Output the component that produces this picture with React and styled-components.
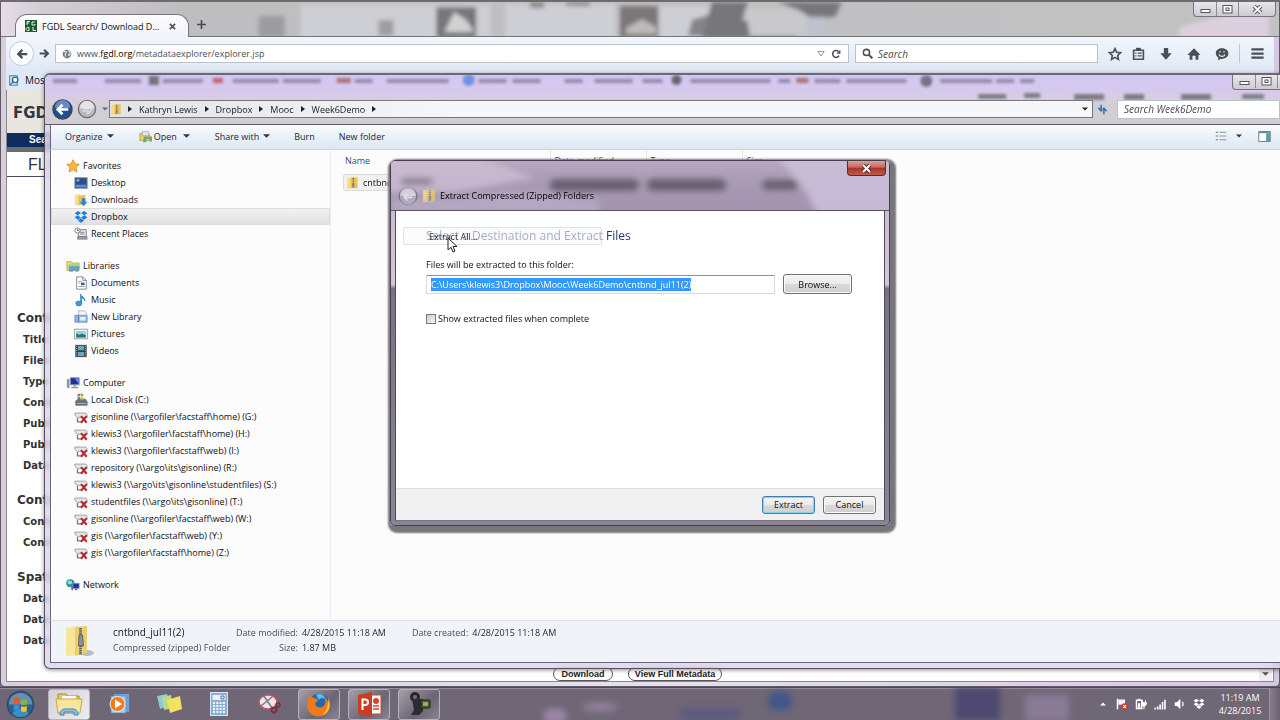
import React, { useEffect, useRef } from "react";
import styled, { createGlobalStyle, css } from "styled-components";

const Global = createGlobalStyle`
  *, *::before, *::after { box-sizing: border-box; }
  html, body { margin: 0; padding: 0; }
  body { font-family: "Open Sans", "Noto Sans", sans-serif; font-size: 9px; color: #0f0f12; overflow: hidden; }
  button, input { font: inherit; color: inherit; margin: 0; }
  a { color: inherit; text-decoration: none; }
  svg { display: block; flex: none; }
  ul { list-style: none; margin: 0; padding: 0; }
  h1, h2, p { margin: 0; font: inherit; }
`;

const Desktop = styled.div`
  position: relative;
  display: flex;
  flex-direction: column;
  height: 100vh;
  background: #6f6676;
  overflow: hidden;
`;

/* ---------- browser ---------- */

const Browser = styled.section`
  flex: 1;
  min-height: 0;
  display: flex;
  flex-direction: column;
  padding: 0 5px 4px;
  border: 1px solid #5d5a62;
  border-top: 2px solid #6c6c6c;
  border-radius: 5px;
  background: linear-gradient(to right, #d9cfdc, #e6e0ee 50%, #d6c8e4);
  position: relative;
`;

const Backdrop = styled.svg`
  position: absolute;
  inset: 0;
  width: 100%;
  height: ${(p) => p.$height};
`;

const TabStrip = styled.header`
  position: relative;
  display: flex;
  height: 35px;
  margin: 0 -5px;
  padding-left: 14px;
  align-items: flex-end;
  border-bottom: 1px solid #74757c;
  background: linear-gradient(to right, #e6dbe8 0, #d4cdd6 40px, #bebdbf 180px, #c1c1c2 100%);
`;

const Tab = styled.div`
  position: relative;
  display: flex;
  align-items: center;
  gap: 5px;
  width: 174px;
  height: 23px;
  margin-bottom: -1px;
  padding: 0 12px 0 9px;
  background: linear-gradient(#fdfcfd, #f1f4f9);
  border: 1px solid #77767c;
  border-bottom: 0;
  border-radius: 12px 12px 0 0;
  color: #111;
`;

const TabTitle = styled.span`
  flex: 1;
  white-space: nowrap;
`;

const Bare = styled.button`
  display: inline-flex;
  align-items: center;
  justify-content: center;
  gap: ${(p) => p.$gap || 0}px;
  width: ${(p) => (p.$w ? `${p.$w}px` : "auto")};
  height: ${(p) => (p.$h ? `${p.$h}px` : "auto")};
  padding: 0;
  border: 0;
  background: none;
  white-space: nowrap;
  flex: none;
`;

const WindowControls = styled.div`
  position: absolute;
  top: 0;
  right: ${(p) => p.$right}px;
  display: flex;
  height: 15px;
  border: 1px solid #77757b;
  border-top: 0;
  border-radius: 0 0 4px 4px;
  background: linear-gradient(#ebe6ee, #cdcad0);
  overflow: hidden;
  button + button { border-left: 1px solid #8d8b92; }
`;

const NavBar = styled.div`
  display: flex;
  align-items: center;
  height: 33px;
  flex: none;
  padding: 0 9px 0 3px;
  background: linear-gradient(#f2f6fc, #dfe9f5);
`;

const RoundButton = styled(Bare)`
  border-radius: 50%;
  border: 1px solid #c3cad4;
  background: #fbfcfe;
`;

const Field = styled.label`
  display: flex;
  align-items: center;
  height: 19px;
  gap: 5px;
  padding: 0 6px;
  background: #fff;
  border: 1px solid #b8c3d1;
  flex: ${(p) => (p.$w ? "none" : 1)};
  width: ${(p) => (p.$w ? `${p.$w}px` : "auto")};
  margin-left: ${(p) => p.$ml || 0}px;
  overflow: hidden;
  input {
    flex: 1;
    min-width: 0;
    border: 0;
    padding: 0;
    outline: 0;
    background: none;
    font-size: 10px;
  }
  input::placeholder { color: #4a4a50; opacity: 1; font-style: italic; }
`;

const Address = styled.a`
  flex: 1;
  color: #4c4f56;
  b { font-weight: 400; color: #000; }
`;

const NavIcons = styled.div`
  display: flex;
  align-items: center;
  gap: 14px;
  margin-left: 10px;
  > :first-child { margin-right: -4px; }
`;

const Divider = styled.span`
  width: 1px;
  height: 19px;
  margin: 0 -4px;
  background: #bcc6d3;
`;

const Bookmarks = styled.div`
  display: flex;
  align-items: center;
  gap: 5px;
  flex: none;
  height: 20px;
  padding-left: 3px;
  background: #dfe9f5;
  font-size: 10px;
`;

const Page = styled.main`
  flex: 1;
  min-height: 0;
  display: flex;
  flex-direction: column;
  background: #fff;
  border: 1px solid #8a8790;
  border-top: 0;
  font-family: "DejaVu Sans", sans-serif;
  color: #333;
  overflow: hidden;
`;

const SiteTitle = styled.h1`
  flex: none;
  height: 43px;
  padding: 0 6px;
  background: #e9e6df;
  font: 700 15px/46px "DejaVu Sans", sans-serif;
  color: #33373f;
`;

const SiteTabs = styled.div`
  flex: none;
  height: 19px;
  padding-left: 22px;
  background: #0c2d5e;
  border-bottom: 5px solid #6b6b6b;
  color: #fff;
  font: 700 10px/14px "Liberation Sans", sans-serif;
`;

const SiteState = styled.h2`
  flex: none;
  height: 25px;
  padding-left: 21px;
  border-bottom: 1px solid #444b66;
  font: 16px/25px "Liberation Sans", sans-serif;
`;

const Meta = styled.ul`
  flex: 1;
  min-height: 0;
  margin-top: 117px;
  padding-left: 16px;
  overflow: hidden;
`;

const MetaLine = styled.li`
  height: 21px;
  line-height: 21px;
  font-weight: 700;
  font-size: 10px;
  ${(p) =>
    p.$head &&
    css`
      margin: 14px 0 0 -6px;
      font-size: 12px;
    `}
`;

const PageActions = styled.footer`
  flex: none;
  display: flex;
  align-items: center;
  gap: 15px;
  height: 14px;
  padding-left: 546px;
`;

const PillButton = styled.button`
  height: 14px;
  width: ${(p) => p.$w}px;
  padding: 0;
  border: 1px solid #555;
  border-radius: 7px;
  background: #fff;
  color: #222;
  font: 700 9px/12px "Liberation Sans", sans-serif;
  white-space: nowrap;
`;

const ScrollCorner = styled(Bare)`
  margin-left: auto;
  margin-right: 1px;
  background: #eee;
`;

/* ---------- explorer ---------- */

const Explorer = styled.section`
  position: absolute;
  left: 44px;
  right: -1px;
  top: 73px;
  bottom: 51px;
  display: flex;
  flex-direction: column;
  padding: 0 0 5px 5px;
  border: 1px solid #55525a;
  border-top: 2px solid #6c6877;
  border-radius: 6px 0 0 6px;
  background: rgba(222, 210, 236, 0.8);
  backdrop-filter: blur(2px);
  box-shadow: 0 1px 4px rgba(0, 0, 0, 0.45);
`;

const Glass = styled.div`
  position: relative;
  flex: none;
  height: 50px;
  margin-left: -5px;
  padding: 25px 0 6px 7px;
  display: flex;
  align-items: center;
  border-radius: 5px 0 0 0;
  background: linear-gradient(#d2c8ee 0, #d5c9f0 14px, #d9cde0 24px, #d2cfd4 30px, #d0ced2 100%);
  border-bottom: 1px solid #5d5c66;
`;

const AddressRow = styled.div`
  position: relative;
  flex: 1;
  min-width: 0;
  height: 20px;
  display: flex;
  align-items: center;
`;

const Crumbs = styled.nav`
  flex: 1;
  height: 18px;
  display: flex;
  align-items: center;
  gap: 7px;
  padding: 0 4px 0 1px;
  border: 1px solid #77757e;
  background: linear-gradient(to right, #e3e2e4, #f7f6f8 35%);
  color: #222;
`;

const Spacer = styled.span`
  flex: 1;
`;

const CommandBar = styled.div`
  flex: none;
  display: flex;
  align-items: center;
  height: 25px;
  padding: 0 9px 2px 14px;
  border-left: 1px solid #6a6872;
  border-bottom: 1px solid #cfd3da;
  background: linear-gradient(#fafcfe, #e9f0f8 50%, #dde7f2);
  color: #1e2637;
`;

const Command = styled(Bare)`
  margin-right: ${(p) => p.$mr}px;
`;

const Body = styled.div`
  flex: 1;
  min-height: 0;
  display: flex;
  background: #fcfcfd;
  border-left: 1px solid #6a6872;
`;

const Sidebar = styled.nav`
  width: 280px;
  flex: none;
  padding-top: 7px;
  border-right: 1px solid #ececf0;
`;

const Group = styled.ul`
  margin-bottom: 15px;
`;

const NavRow = styled.a`
  display: flex;
  align-items: center;
  gap: 3px;
  height: 17px;
  padding-left: ${(p) => (p.$root ? 15 : 23)}px;
  white-space: nowrap;
  ${(p) =>
    p.$active &&
    css`
      background: linear-gradient(#f3f3f3, #e0e0e0);
      box-shadow: inset 0 0 0 1px #dcdcdc;
    `}
`;

const Files = styled.table`
  flex: 1;
  height: max-content;
  border-collapse: collapse;
  table-layout: fixed;
  th { height: 20px; padding: 0 0 0 14px; font-weight: 400; text-align: left; color: #3c4e66; }
  th:nth-child(n + 2) { padding-left: 4px; border-left: 1px solid #e6e6ea; }
  td { padding: 4px 0 0 12px; }
`;

const FileCell = styled.span`
  display: flex;
  align-items: center;
  gap: 5px;
  height: 17px;
  width: 190px;
  padding-left: 3px;
  border: 1px solid #dcdcdc;
  border-radius: 2px;
  background: #f0f0f1;
`;

const Details = styled.footer`
  flex: none;
  display: flex;
  align-items: flex-start;
  height: 43px;
  padding: 4px 0 0 13px;
  border: 1px solid #6a6872;
  border-top-color: #dcdfe6;
  border-right: 0;
  background: #f1f3fa;
  color: #444f5f;
  line-height: 15px;
`;

const DetailsName = styled.div`
  width: 123px;
  margin-left: 18px;
  b { display: block; font-weight: 400; font-size: 10px; color: #17171c; }
`;

const Facts = styled.dl`
  display: grid;
  grid-template-columns: max-content max-content;
  column-gap: 4px;
  margin: 0 26px 0 0;
  dt { text-align: right; }
  dd { margin: 0; color: #1c2532; }
`;

/* ---------- dialog ---------- */

const Dialog = styled.section`
  position: absolute;
  left: 390px;
  top: 160px;
  width: 500px;
  height: 366px;
  display: flex;
  flex-direction: column;
  padding: 0 4px 4px;
  border: 1px solid #44414b;
  border-radius: 5px;
  background: linear-gradient(#c3b6ce, #d3c7dc 34%, #7b7088 35%, #8b8497);
  box-shadow: 2px 3px 2px 4px #77767a;
`;

const DialogTop = styled.header`
  position: relative;
  flex: none;
  height: 50px;
  margin: 0 -4px;
  padding: 20px 0 0 6px;
  display: flex;
  align-items: center;
  gap: 5px;
  border-radius: 4px 4px 0 0;
  border-bottom: 1px solid #5a5463;
  background: linear-gradient(#b9a8c3 0, #a99bb3 20px, #a294af 50px);
  overflow: hidden;
`;

const DialogTitle = styled.h1`
  position: relative;
  color: #000;
  white-space: nowrap;
`;

const CloseButton = styled.button`
  position: absolute;
  top: 0;
  right: 3px;
  width: 39px;
  height: 15px;
  padding: 0;
  display: flex;
  align-items: center;
  justify-content: center;
  border: 1px solid #5b2a30;
  border-top: 0;
  border-radius: 0 0 4px 4px;
  background: linear-gradient(#dba19b, #c8665d 45%, #a83228 50%, #c5584a);
`;

const DialogBody = styled.form`
  flex: 1;
  display: flex;
  flex-direction: column;
  background: #fff;
  border: 1px solid #4f4b57;
  border-top: 0;
  border-bottom-color: #77727f;
`;

const DialogMain = styled.div`
  position: relative;
  flex: 1;
  padding: 15px 32px 0 30px;
`;

const Heading = styled.h2`
  font-size: 12px;
  line-height: 20px;
  color: #1f3a73;
`;

const FolderLabel = styled.label`
  display: block;
  margin-top: 11px;
  line-height: 16px;
`;

const FolderRow = styled.div`
  display: flex;
  align-items: center;
  gap: 8px;
  margin-top: 1px;
`;

const FolderInput = styled.input`
  flex: 1;
  min-width: 0;
  height: 19px;
  padding: 0 4px;
  outline: 0;
  border: 1px solid #d5dae2;
  border-top-color: #8b919c;
  &::selection { background: #3399ff; color: #fff; }
`;

const PushButton = styled.button`
  width: ${(p) => p.$w}px;
  height: ${(p) => p.$h}px;
  padding: 0;
  border: 1px solid ${(p) => (p.$primary ? "#3c7fb1" : "#707070")};
  border-radius: 3px;
  background: linear-gradient(#f4f4f4, #ebebeb 50%, #dadada 50%, #cfcfcf);
  box-shadow: inset 0 0 0 1px ${(p) => (p.$primary ? "#7fd3f5" : "#fafafa")};
`;

const Check = styled.label`
  display: flex;
  align-items: center;
  gap: 2px;
  margin-top: 18px;
  line-height: 14px;
  input {
    appearance: none;
    width: 10px;
    height: 10px;
    border: 1px solid #77797d;
    background: linear-gradient(135deg, #c9ccd0, #f4f4f4);
  }
`;

const DialogFooter = styled.footer`
  flex: none;
  display: flex;
  align-items: center;
  justify-content: flex-end;
  gap: 8px;
  height: 32px;
  padding-right: 8px;
  border-top: 1px solid #dfdfdf;
  background: #f0f0f0;
`;

const GhostItem = styled.div`
  position: absolute;
  left: 7px;
  top: 16px;
  width: 199px;
  height: 18px;
  padding-left: 25px;
  line-height: 17px;
  color: #333;
  border: 1px solid rgba(190, 200, 220, 0.5);
  border-radius: 2px;
  background: rgba(248, 249, 250, 0.6);
`;

const Pointer = styled.svg`
  position: absolute;
  left: 447px;
  top: 237px;
`;

/* ---------- taskbar ---------- */

const Taskbar = styled.footer`
  position: relative;
  flex: none;
  height: 33px;
  display: flex;
  align-items: center;
  border-top: 1px solid #4d4856;
  background: #6f6676;
  box-shadow: inset 0 1px 0 #938a9b;
`;

const TaskItem = styled.button`
  position: relative;
  width: ${(p) => p.$w || 42}px;
  height: 31px;
  margin-right: 8px;
  padding: 0;
  display: flex;
  align-items: center;
  justify-content: center;
  border: 1px solid transparent;
  background: none;
  ${(p) =>
    p.$open &&
    css`
      border-color: #b7b0bd;
      border-radius: 3px;
      background: ${p.$open === "active"
        ? "linear-gradient(135deg, #d5d2d8, #ecebee)"
        : "linear-gradient(135deg, #a59fab, #6b6472 60%, #8b8492)"};
    `}
`;

const Tray = styled.div`
  position: relative;
  margin-left: auto;
  display: flex;
  align-items: center;
  gap: 7px;
  height: 100%;
`;

const Clock = styled.time`
  width: 56px;
  text-align: center;
  line-height: 13px;
  color: #fff;
`;

const ShowDesktop = styled.button`
  width: 11px;
  height: 32px;
  margin-left: -6px;
  padding: 0;
  border: 1px solid #9a92a3;
  border-width: 0 0 0 1px;
  background: linear-gradient(to right, #857c8d, #6b6272);
`;

/* ---------- drawings ---------- */

const Ico = ({ s = 14, w, h, vb = "0 0 16 16", children, label }) => (
  <svg width={w || s} height={h || s} viewBox={vb} aria-label={label} aria-hidden={label ? undefined : true}>
    {children}
  </svg>
);

const Down = ({ color = "#2c3446", w = 7 }) => (
  <Ico w={w} h={4} vb="0 0 8 4"><path d="M0 0h8L4 4z" fill={color} /></Ico>
);
const Right = () => <Ico w={4} h={6} vb="0 0 4 6"><path d="M0 0l4 3-4 3z" fill="#222" /></Ico>;

const Minimize = () => <Ico w={11} h={9} vb="0 0 11 9"><rect x="1" y="4.5" width="9" height="3" fill="#fff" stroke="#555" /></Ico>;
const Maximize = () => (
  <Ico w={11} h={9} vb="0 0 11 9">
    <rect x="1" y=".5" width="9" height="7.5" fill="#fff" stroke="#555" />
    <rect x="4" y="3" width="3" height="2.5" fill="none" stroke="#555" />
  </Ico>
);
const CloseGlyph = ({ light }) => (
  <Ico w={11} h={9} vb="0 0 11 9">
    <path d="M2 1l7 7M9 1L2 8" stroke={light ? "#5a2b2b" : "#555"} strokeWidth="4" />
    <path d="M2 1l7 7M9 1L2 8" stroke="#fff" strokeWidth="2" />
  </Ico>
);

const ZipIcon = ({ w = 12, h = 14 }) => (
  <Ico w={w} h={h} vb="0 0 12 14">
    <path d="M0 1.5L5.5 0v12.5L0 14z" fill="#f6dc75" />
    <path d="M4 1l8-.6V13H4z" fill="#e9c453" />
    <path d="M7 1v11" stroke="#5b5b5b" strokeWidth="1.6" strokeDasharray="1.2 .8" />
    <path d="M5.6 8h2.6v4H5.6z" fill="#7f878d" />
  </Ico>
);
const Folder = ({ children }) => (
  <Ico>
    <path d="M1 2l6-1v13H1z" fill="#f8e08a" />
    <path d="M5 3l8-1v11l-8 1z" fill="#e8c35a" />
    {children}
  </Ico>
);

const icons = {
  star: <Ico><path d="M8 .8l2.2 4.7 5 .7-3.7 3.500 1 5.200L8 12.400l-4.500 2.500 1-5.200L.8 6.200l5-.7z" fill="#f8b63c" stroke="#d3801f" strokeWidth=".8" /></Ico>,
  desktop: <Ico><rect x="1" y="2" width="14" height="12" fill="#28508f" stroke="#7a8aa0" /><path d="M2 10h12v3H2z" fill="#5f8ccf" /><path d="M3 4h3v2H3z" fill="#aac6ef" /></Ico>,
  downloads: <Folder><path d="M9 6h4v4h2.500L11 15 6.500 10H9z" fill="#2f86c9" /></Folder>,
  dropbox: <Ico><path d="M4.500 1L8 3.500 4 6 .8 3.700zM11.500 1L15.200 3.700 12 6 8 3.500zM4 6l4 2.500-3.500 2.500L.8 8.400zM12 6l3.200 2.400-3.700 2.600L8 8.500zM8 9.400l3.500 2.500L8 14.500l-3.500-2.600z" fill="#1a7bdc" /></Ico>,
  recent: <Ico><path d="M5 3h9v8H5z" fill="#e8ebef" stroke="#777" /><path d="M7 6h5M7 8h5" stroke="#777" /><path d="M4 11h11v3H4z" fill="#9ba1a8" stroke="#666" strokeWidth=".6" /><circle cx="4" cy="4" r="3" fill="#f5f5f5" stroke="#777" /><path d="M4 2.500V4h1.500" stroke="#444" fill="none" /></Ico>,
  libraries: <Ico><path d="M1 3h5l1 1.500h8V13H1z" fill="#efd37b" stroke="#b79a4a" strokeWidth=".8" /><path d="M3 6h12v4H3z" fill="#9cd09b" /><path d="M4 9h11l-1 5h-3v-2H8v2H4z" fill="#62a6d6" stroke="#3d7ba8" strokeWidth=".6" /></Ico>,
  documents: <Ico><path d="M3 1h7l4 4v10H3z" fill="#fff" stroke="#75808d" /><path d="M10 1v4h4" fill="none" stroke="#75808d" /><path d="M5 6h4M5 8h2M5 12h7" stroke="#8b98a8" /><path d="M8 7.500h4v3H8z" fill="#3d5f8d" /></Ico>,
  music: <Ico><path d="M7.500 12V1c.5 3 5.500 3.500 5 8-.6-2-2-3-4-3.200V12z" fill="#2a86cc" stroke="#1d6dae" strokeWidth=".6" /><ellipse cx="5.500" cy="12" rx="3.500" ry="2.800" fill="#3f9bdd" stroke="#1d6dae" strokeWidth=".6" /></Ico>,
  newlib: <Ico><path d="M5 1h7l2 2v6H5z" fill="#f3f7fc" stroke="#8da4c0" strokeWidth=".8" /><path d="M1 6h4v8H1zM5 6h10v8H5z" fill="#93b9e4" stroke="#5c83b4" strokeWidth=".8" /><path d="M7 8h6v4H7z" fill="#e7f0fa" /></Ico>,
  pictures: <Ico><rect x=".7" y="2.500" width="14.500" height="11" fill="#f7f9fa" stroke="#8e9499" /><path d="M2.500 4.500h11v7.500h-11z" fill="#8fd0e0" /><path d="M2.500 7l4 2 2-1.500 5 2v2.500h-11z" fill="#2c7566" /></Ico>,
  videos: <Ico><rect x="1.500" y="1" width="13" height="14" fill="#35424e" /><path d="M4.500 2h7v5h-7zM4.500 9h7v5h-7z" fill="#6ea3b8" /><path d="M3 2v13M13 2v13" stroke="#d6dde2" strokeDasharray="1 1.500" /></Ico>,
  computer: <Ico><path d="M1 4l3-1v11l-3-1z" fill="#8a93a3" /><rect x="5" y="2" width="10" height="8" fill="#1d2fa0" stroke="#8892a8" /><path d="M10 2.500h4.500v7z" fill="#6c83dd" /><path d="M8 10.500h4v1.500H8zM6 12.500h8V14H6z" fill="#8b93a0" /></Ico>,
  disk: <Ico><path d="M2 9l3-2h8l2 3v4H2z" fill="#6c7479" stroke="#4c5459" strokeWidth=".7" /><path d="M3 12h11" stroke="#a8d060" /><path d="M4 1.500l3-1v3l-3 .8z" fill="#e0602d" /><path d="M7.500.5l3 .5v3l-3-.5z" fill="#7dba3d" /><path d="M4 5l3-.7v3H4z" fill="#3d86d0" /><path d="M7.500 4.300l3 .5v2.700h-3z" fill="#efc032" /></Ico>,
  netdrive: <Ico><path d="M1 3.500h12.500l1.500 2v3H4L1 6z" fill="#e3e5e8" stroke="#8f9296" strokeWidth=".9" /><path d="M4 9v4.500h4" stroke="#73777c" strokeWidth="1.500" fill="none" /><path d="M8 7l6.500 7.500M14.500 7L8 14.500" stroke="#b8262b" strokeWidth="2.400" /></Ico>,
  network: <Ico><circle cx="5" cy="6" r="4.700" fill="#2b93a8" /><path d="M2 4c2-2 5-1 5 1S3 8 2 6z" fill="#9ddcc7" /><rect x="8" y="6" width="7" height="6" fill="#1f30a8" stroke="#8d97b0" strokeWidth=".8" /><path d="M10 12.500h3V14h-3zM6 9h2v5H6z" fill="#66718a" /></Ico>,
};

const groups = [
  [["star", "Favorites"], ["desktop", "Desktop"], ["downloads", "Downloads"], ["dropbox", "Dropbox"], ["recent", "Recent Places"]],
  [["libraries", "Libraries"], ["documents", "Documents"], ["music", "Music"], ["newlib", "New Library"], ["pictures", "Pictures"], ["videos", "Videos"]],
  [
    ["computer", "Computer"],
    ["disk", "Local Disk (C:)"],
    ["netdrive", "gisonline (\\\\argofiler\\facstaff\\home) (G:)"],
    ["netdrive", "klewis3 (\\\\argofiler\\facstaff\\home) (H:)"],
    ["netdrive", "klewis3 (\\\\argofiler\\facstaff\\web) (I:)"],
    ["netdrive", "repository (\\\\argo\\its\\gisonline) (R:)"],
    ["netdrive", "klewis3 (\\\\argo\\its\\gisonline\\studentfiles) (S:)"],
    ["netdrive", "studentfiles (\\\\argo\\its\\gisonline) (T:)"],
    ["netdrive", "gisonline (\\\\argofiler\\facstaff\\web) (W:)"],
    ["netdrive", "gis (\\\\argofiler\\facstaff\\web) (Y:)"],
    ["netdrive", "gis (\\\\argofiler\\facstaff\\home) (Z:)"],
  ],
  [["network", "Network"]],
];

const meta = [
  ["Content", "Title", "Files", "Type", "Contact", "Publish", "Publish", "Data"],
  ["Contact", "Contact", "Contact"],
  ["Spatial", "Data", "Data", "Data"],
];

const Arrow = ({ flip, color = "#4a4d53", s = 12 }) => (
  <Ico s={s}><g transform={flip ? "matrix(-1 0 0 1 16 0)" : undefined}><path d="M15 8H4M8.500 2.500L3 8l5.500 5.500" fill="none" stroke={color} strokeWidth="3" /></g></Ico>
);

const TabStripArt = () => (
  <Backdrop $height="34px" viewBox="0 0 1280 34" preserveAspectRatio="none" aria-hidden="true">
    <defs><filter id="soft"><feGaussianBlur stdDeviation="2" /></filter></defs>
    <g filter="url(#soft)">
      <path d="M300 2h190v34H300zM505 2h110v34H505zM660 4h50v32h-50z" fill="#cecfd4" />
      <path d="M436 5h40v31h-40z" fill="#77777a" />
      <path d="M444 30l10-20 12 8 8 12z" fill="#d2d2d2" />
      <path d="M620 4h38v32h-38z" fill="#7d7679" />
      <path d="M626 26l16-9 14 8v7h-30z" fill="#bcb9ba" />
      <path d="M688 34l4-16 20-6v22z" fill="#858589" />
      <path d="M712 0h36l-6 18 60 18h-100z" fill="#77777a" />
      <path d="M746 6h34l34 10v18h-64z" fill="#c9c9cc" />
      <path d="M778 0h64l-6 14-22 4-14-10z" fill="#77777a" />
      <path d="M806 15h20v20h-20z" fill="#bfc2ca" />
      <path d="M378 18h15v16h-15zM258 14h26v22h-26z" fill="#9d9da1" />
      <path d="M530 0h14v6h-14zM566 0h24v4h-24z" fill="#88888b" />
      <path d="M1180 25l90-23v34h-90z" fill="#dcd0df" />
    </g>
  </Backdrop>
);

const GlassArt = () => (
  <Backdrop $height="28px" viewBox="0 0 1236 28" preserveAspectRatio="none" aria-hidden="true">
    <defs><filter id="haze"><feGaussianBlur stdDeviation="1.600" /></filter></defs>
    <g filter="url(#haze)" fill="#7d7492" fillOpacity=".75">
      <path d="M8 4h24v4H8zM60 4h36v4H60zM118 4h40v4h-40zM188 4h46v4h-46zM238 4h38v4h-38zM310 4h18v4h-18zM342 4h62v4h-62z" />
      <path d="M434 4h28v4h-28zM468 4h28v4h-28zM520 4h18v4h-18zM550 4h38v4h-38zM598 4h20v4h-20zM646 4h80v4h-80zM734 4h12v4h-12zM770 4h26v4h-26zM802 4h60v4h-60z" />
      <path d="M896 4h52v4h-52zM952 4h18v4h-18zM976 4h14v4h-14z" />
      <circle cx="424" cy="5" r="6" fill="#4f7fe0" />
      <circle cx="632" cy="5" r="5" fill="#444" />
      <circle cx="882" cy="6" r="6" fill="#555763" />
      <path d="M104 1h10v9h-10z" fill="#555" />
      <path d="M168 3h10v5h-10z" fill="#c23a44" />
      <path d="M292 3h14v5h-14zM752 3h12v5h-12z" fill="#a0544a" />
      <path d="M934 19h28v5h-28zM980 18h16v5h-16zM1030 19h30v6h-30zM1080 19h20v6h-20zM1137 19h30v6h-30zM1198 19h22v5h-22z" fill="#77727a" fillOpacity=".9" />
    </g>
  </Backdrop>
);

const DialogArt = () => (
  <Backdrop $height="50px" viewBox="0 0 502 50" preserveAspectRatio="none" aria-hidden="true">
    <defs><filter id="mist"><feGaussianBlur stdDeviation="3" /></filter></defs>
    <g filter="url(#mist)">
      <path d="M-5-5h90l60 22-80 14H-5z" fill="#cfc0d6" fillOpacity=".75" />
      <path d="M390-5h120v60H430l-10-22z" fill="#cdbfda" fillOpacity=".85" />
      <path d="M0 38h60l60-8 90 10v12H0z" fill="#bcaec8" fillOpacity=".7" />
      <rect x="160" y="18" width="90" height="12" rx="6" fill="#675e70" />
      <rect x="258" y="18" width="80" height="12" rx="6" fill="#675e70" />
      <rect x="374" y="19" width="36" height="10" rx="5" fill="#675e70" />
      <rect x="10" y="17" width="32" height="7" rx="3" fill="#877c8f" />
    </g>
  </Backdrop>
);

const TaskbarArt = () => (
  <Backdrop $height="32px" viewBox="0 0 1280 32" preserveAspectRatio="none" aria-hidden="true">
    <defs><filter id="dim"><feGaussianBlur stdDeviation="3" /></filter></defs>
    <g filter="url(#dim)">
      <ellipse cx="555" cy="28" rx="12" ry="8" fill="#9a86a5" />
      <ellipse cx="600" cy="19" rx="18" ry="5" fill="#8f7f98" />
      <ellipse cx="780" cy="13" rx="12" ry="10" fill="#40578a" />
      <path d="M680 20h60v12h-60z" fill="#5b5c7f" />
      <path d="M955 0h45v32h-45z" fill="#4e4a70" />
      <path d="M1025 7h44v26h-44z" fill="#897a95" />
    </g>
  </Backdrop>
);

const BrowserWindow = () => (
  <Browser aria-label="Browser">
    <TabStrip>
      <TabStripArt />
      <Tab>
        <Ico s={12} vb="0 0 12 12"><path d="M0 0h12v12H0z" fill="#1c5a2d" /><path d="M2 5V1.500h3M2 3h2M10 2H7v3h3V4M4 7.500c-4-1-4 4 0 3v-3M8 7v3.500h3" stroke="#e3f3e3" fill="none" /></Ico>
        <TabTitle>FGDL Search/ Download D...</TabTitle>
        <Bare aria-label="Close tab"><Ico s={7} vb="0 0 8 8"><path d="M1 1l6 6M7 1L1 7" stroke="#555" strokeWidth="2" /></Ico></Bare>
      </Tab>
      <Bare $w={24} $h={23} aria-label="New tab"><Ico s={9} vb="0 0 8 8"><path d="M4 0v8M0 4h8" stroke="#4b4b4f" strokeWidth="1.500" /></Ico></Bare>
      <WindowControls $right={3}>
        <Bare $w={22} $h={14} aria-label="Minimize"><Minimize /></Bare>
        <Bare $w={22} $h={14} aria-label="Restore"><Maximize /></Bare>
        <Bare $w={37} $h={14} aria-label="Close"><CloseGlyph /></Bare>
      </WindowControls>
    </TabStrip>
    <NavBar>
      <RoundButton $w={25} $h={25} aria-label="Back"><Arrow /></RoundButton>
      <Bare $w={20} $h={20} aria-label="Forward"><Arrow flip s={11} /></Bare>
      <Field as="div" $ml={1}>
        <Ico s={10}><circle cx="8" cy="8" r="7" fill="#777b80" /><path d="M3 5c3-3 5 0 3 2s1 4-1 5M10 2c1 3 4 2 3 6s-2 2-3 0" stroke="#dfe2e5" strokeWidth="2" fill="none" /></Ico>
        <Address href="#">www.<b>fgdl.org</b>/metadataexplorer/explorer.jsp</Address>
        <Ico w={8} h={6} vb="0 0 8 6"><path d="M.8.5h6.400L4 5z" fill="none" stroke="#999" /></Ico>
        <Bare $w={12} aria-label="Reload"><Ico s={10}><path d="M13 10.500A5.500 5.500 0 1 1 12 4" fill="none" stroke="#4d4f54" strokeWidth="2.400" /><path d="M15 1v6.500H8.500z" fill="#4d4f54" /></Ico></Bare>
      </Field>
      <Field $w={243} $ml={6}>
        <Ico s={11}><circle cx="6.500" cy="6.500" r="4.500" fill="none" stroke="#4c4e54" strokeWidth="2.200" /><path d="M10 10l5 5" stroke="#4c4e54" strokeWidth="3" /></Ico>
        <input aria-label="Search the web" placeholder="Search" />
      </Field>
      <NavIcons>
        <Bare aria-label="Bookmark"><Ico><path d="M8 1.800l1.900 4.100 4.500.6-3.300 3.100.9 4.500-4-2.300-4 2.300.9-4.500L1.600 6.500l4.500-.6z" fill="none" stroke="#4c4e54" strokeWidth="1.800" /></Ico></Bare>
        <Bare aria-label="Bookmarks list"><Ico s={13}><path d="M2 4h12v11H2z" fill="none" stroke="#4c4e54" strokeWidth="2" /><path d="M5 1h6v3H5z" fill="#4c4e54" /><path d="M4 7.500h1.500M7 7.500h5M4 11h1.500M7 11h5" stroke="#4c4e54" strokeWidth="1.500" /></Ico></Bare>
        <Bare aria-label="Downloads"><Ico><path d="M5.500 1h5v6h4L8 14.500 1.500 7h4z" fill="#4c4e54" /></Ico></Bare>
        <Bare aria-label="Home"><Ico><path d="M8 1.500L15.500 9H13v5.500H9.800V10H6.200v4.500H3V9H.5z" fill="#4c4e54" /></Ico></Bare>
        <Bare aria-label="Chat"><Ico><path d="M8 1.500c4.500 0 7.300 2.600 7.300 6S12.500 13.500 8 13.500c-1.300 0-3 1-5 1.500.8-1 1-2 .6-3C-2 7 2 1.500 8 1.500z" fill="#4c4e54" /><path d="M4.500 8.500c1.500 3 5.500 3 7 0" stroke="#e9eef6" strokeWidth="1.300" fill="none" /><path d="M5 5.500h1.500M9.500 5.500H11" stroke="#e9eef6" strokeWidth="1.400" /></Ico></Bare>
        <Divider />
        <Bare aria-label="Menu"><Ico s={15}><path d="M1.500 3.500h13M1.500 8h13M1.500 12.500h13" stroke="#4c4e54" strokeWidth="2.400" /></Ico></Bare>
      </NavIcons>
    </NavBar>
    <Bookmarks>
      <Ico s={11}><path d="M1 1h11v14H1z" fill="#d8e6f4" stroke="#4b83ad" strokeWidth="1.500" /><circle cx="9" cy="7" r="4" fill="#fff" stroke="#2d6c99" strokeWidth="2" /><path d="M6 10l-4 4" stroke="#2d6c99" strokeWidth="2" /></Ico>
      <a href="#">Most</a>
    </Bookmarks>
    <Page>
      <SiteTitle>FGDL</SiteTitle>
      <SiteTabs>Search</SiteTabs>
      <SiteState>FLO</SiteState>
      <Meta>
        {meta.map((list, i) =>
          list.map((text, j) => <MetaLine key={`${i}-${j}`} $head={j === 0}>{text}</MetaLine>)
        )}
      </Meta>
      <PageActions>
        <PillButton $w={60}>Download</PillButton>
        <PillButton $w={94}>View Full Metadata</PillButton>
        <ScrollCorner $w={13} $h={13} aria-label="Scroll down"><Down color="#555" /></ScrollCorner>
      </PageActions>
    </Page>
  </Browser>
);

const ExplorerWindow = () => (
  <Explorer aria-label="Week6Demo">
    <Glass>
      <GlassArt />
      <WindowControls $right={-38}>
        <Bare $w={22} $h={13} aria-label="Minimize"><Minimize /></Bare>
        <Bare $w={22} $h={13} aria-label="Restore"><Maximize /></Bare>
        <Bare $w={40} $h={13} aria-label="Close"><CloseGlyph /></Bare>
      </WindowControls>
      <AddressRow>
        <Bare $w={21} aria-label="Back">
          <Ico s={21} vb="0 0 22 22"><circle cx="11" cy="11" r="10" fill="#1d4f94" stroke="#38445c" strokeWidth="1.400" /><path d="M3 9a8 8 0 0 1 16 0c-5 2-11 2-16 0z" fill="#7fa8dc" fillOpacity=".7" /><path d="M17 11H7M11 6l-5 5 5 5" stroke="#fff" strokeWidth="2.800" fill="none" /></Ico>
        </Bare>
        <Bare $w={27} aria-label="Forward">
          <Ico s={20} vb="0 0 22 22"><circle cx="11" cy="11" r="9.500" fill="#b9b8bd" stroke="#6e6d74" strokeWidth="1.400" /><path d="M3 10a8 8 0 0 1 16 0c-5 2-11 2-16 0z" fill="#e5e4e8" /><path d="M6 13h6v3l5-5" stroke="#d8d7db" strokeWidth="2" fill="none" /></Ico>
        </Bare>
        <Bare $w={9} aria-label="Recent locations"><Down color="#4a6a9a" w={6} /></Bare>
        <Crumbs>
          <ZipIcon w={10} h={11} />
          <Right /><a href="#">Kathryn Lewis</a>
          <Right /><a href="#">Dropbox</a>
          <Right /><a href="#">Mooc</a>
          <Right /><a href="#">Week6Demo</a>
          <Right />
          <Spacer />
          <Down color="#222" w={6} />
        </Crumbs>
        <Bare $w={19} $h={18} aria-label="Refresh"><Ico s={11}><path d="M6 1v8M2 5.500L6 10l1.500-2M10 15V7M14 10.500L10 6 8.500 8" stroke="#2f6db3" strokeWidth="2.200" fill="none" /></Ico></Bare>
        <Field $w={163} $ml={5}>
          <input aria-label="Search Week6Demo" placeholder="Search Week6Demo" />
        </Field>
      </AddressRow>
    </Glass>
    <CommandBar>
      <Command $gap={4} $mr={25}>Organize <Down /></Command>
      <Command $gap={2} $mr={25}>
        <Ico s={13}><path d="M1 4h5l1 1h6v8H1z" fill="#ecd06f" stroke="#a8914a" strokeWidth=".8" /><path d="M4 2h8v5H4z" fill="#dfe8ef" stroke="#8795a0" strokeWidth=".7" /><path d="M6 8h10v6h-3v-3H9v4H5z" fill="#79a66d" /></Ico>
        Open <Spacer /><Spacer /><Down />
      </Command>
      <Command $gap={4} $mr={24}>Share with <Down /></Command>
      <Command $mr={24}>Burn</Command>
      <Command>New folder</Command>
      <Spacer />
      <Command $mr={16} $gap={9} aria-label="Change view"><Ico s={12}><path d="M1 3h3M1 8h3M1 13h3" stroke="#5580a8" strokeWidth="1.500" /><path d="M6 3h9M6 8h9M6 13h9" stroke="#888" strokeWidth="1.200" /></Ico><Down w={6} /></Command>
      <Command aria-label="Preview pane"><Ico s={13}><rect x="1" y="2" width="14" height="12" fill="#fff" stroke="#4f6880" /><path d="M1 2h14v2H1z" fill="#6d8aa5" /><path d="M10 4h5v10h-5z" fill="#5f9ca8" /></Ico></Command>
    </CommandBar>
    <Body>
      <Sidebar>
        {groups.map((rows) => (
          <Group key={rows[0][1]}>
            {rows.map(([icon, text], i) => (
              <li key={text}>
                <NavRow href="#" $root={i === 0} $active={text === "Dropbox"}>{icons[icon]}{text}</NavRow>
              </li>
            ))}
          </Group>
        ))}
      </Sidebar>
      <Files>
        <colgroup><col width="219" /><col width="96" /><col width="96" /><col /></colgroup>
        <thead><tr><th>Name</th><th>Date modified</th><th>Type</th><th>Size</th></tr></thead>
        <tbody><tr><td><FileCell><ZipIcon w={11} h={12} />cntbnd_jul11(2)</FileCell></td><td /><td /><td /></tr></tbody>
      </Files>
    </Body>
    <Details>
      <Ico w={31} h={33} vb="0 0 31 33">
        <ellipse cx="23" cy="28" rx="7" ry="3" fill="#b9bcc4" />
        <path d="M2 3l12-2v29L2 31z" fill="#f8e598" />
        <path d="M11 2l12-1v27l-12 3z" fill="#ecd06c" />
        <path d="M16.500 3v27" stroke="#555a5e" strokeWidth="2.600" strokeDasharray="1.500 .7" />
        <path d="M15 10h3.500l1 11h-5z" fill="#8d9499" stroke="#4c5054" strokeWidth=".8" />
      </Ico>
      <DetailsName><b>cntbnd_jul11(2)</b>Compressed (zipped) Folder</DetailsName>
      <Facts><dt>Date modified:</dt><dd>4/28/2015 11:18 AM</dd><dt>Size:</dt><dd>1.87 MB</dd></Facts>
      <Facts><dt>Date created:</dt><dd>4/28/2015 11:18 AM</dd></Facts>
    </Details>
  </Explorer>
);

const ExtractDialog = () => {
  const folder = useRef(null);
  useEffect(() => {
    folder.current.focus();
    folder.current.select();
  }, []);
  return (
    <Dialog role="dialog" aria-label="Extract Compressed (Zipped) Folders">
      <DialogTop>
        <DialogArt />
        <Bare $w={21} aria-label="Back">
          <Ico s={20} vb="0 0 22 22"><circle cx="11" cy="11" r="9.800" fill="#a9a6b0" stroke="#5f5b68" strokeWidth="1.400" /><path d="M2.500 11a8.500 8.500 0 0 1 17 0z" fill="#d8d6dd" /><path d="M16 12.500H8M10.500 9L7 12.500l3.500 3.500" stroke="#eceaf0" strokeWidth="2" fill="none" /></Ico>
        </Bare>
        <ZipIcon w={12} h={14} />
        <DialogTitle>Extract Compressed (Zipped) Folders</DialogTitle>
        <CloseButton aria-label="Close"><CloseGlyph light /></CloseButton>
      </DialogTop>
      <DialogBody onSubmit={(e) => e.preventDefault()}>
        <DialogMain>
          <Heading>Select a Destination and Extract Files</Heading>
          <FolderLabel htmlFor="folder">Files will be extracted to this folder:</FolderLabel>
          <FolderRow>
            <FolderInput id="folder" ref={folder} defaultValue={"C:\\Users\\klewis3\\Dropbox\\Mooc\\Week6Demo\\cntbnd_jul11(2)"} spellCheck={false} />
            <PushButton type="button" $w={69} $h={20}>Browse...</PushButton>
          </FolderRow>
          <Check><input type="checkbox" />Show extracted files when complete</Check>
          <GhostItem>Extract All...</GhostItem>
        </DialogMain>
        <DialogFooter>
          <PushButton $w={53} $h={18} $primary>Extract</PushButton>
          <PushButton type="button" $w={53} $h={18}>Cancel</PushButton>
        </DialogFooter>
      </DialogBody>
    </Dialog>
  );
};

const Start = () => (
  <Ico s={29} vb="0 0 30 30">
    <circle cx="15" cy="15" r="13.500" fill="#2a6291" stroke="#324a64" strokeWidth="1.500" />
    <path d="M3 15a12 12 0 0 1 24 0z" fill="#7c9fb8" fillOpacity=".75" />
    <ellipse cx="15" cy="24" rx="8" ry="4" fill="#36a6d8" fillOpacity=".7" />
    <path d="M8 9c2-1.500 4-1.500 6 0v5.500c-2-1.500-4-1.500-6 0z" fill="#e2572b" />
    <path d="M15.500 9.500c2 1.200 4 1.200 6-.3v5.500c-2 1.500-4 1.500-6 .3z" fill="#80b83c" />
    <path d="M8 16c2-1.500 4-1.500 6 0v5.500c-2-1.500-4-1.500-6 0z" fill="#3f8fd8" />
    <path d="M15.500 16.500c2 1.200 4 1.200 6-.3v5.500c-2 1.500-4 1.500-6 .3z" fill="#f5c12f" />
  </Ico>
);

const TaskbarBar = () => (
  <Taskbar>
    <TaskbarArt />
    <TaskItem $w={40} aria-label="Start"><Start /></TaskItem>
    <TaskItem $open="active" aria-label="File explorer">
      <Ico w={28} h={26} vb="0 0 28 26"><path d="M3 3h8l2 2h11v17H3z" fill="#e5c765" stroke="#a98c3c" /><path d="M7 5h14v5H7z" fill="#fdfdfd" /><path d="M1 8h26l-2 14H3z" fill="#f7e59a" stroke="#c7a951" /><path d="M5 24c0-4 2-6 5-6h8c3 0 5 2 5 6h-4v-3h-10v3z" fill="#8ac1e8" stroke="#3f86bd" /></Ico>
    </TaskItem>
    <TaskItem aria-label="Media player">
      <Ico w={22} h={22} vb="0 0 22 22"><path d="M6 1h15v18H6z" fill="#6fa6d4" /><path d="M3 3h15v17H3z" fill="#a7cdec" stroke="#5788b4" strokeWidth=".7" /><circle cx="9.500" cy="11" r="7.500" fill="#ee7d1f" stroke="#fff" strokeWidth=".8" /><path d="M7 6.500l7 4.500-7 4.500z" fill="#fff" /></Ico>
    </TaskItem>
    <TaskItem aria-label="Sticky notes">
      <Ico w={28} h={22} vb="0 0 28 22"><path d="M2 3l10-2 3 11-10 4z" fill="#8ccbd6" /><path d="M7 4l9-2 2 13-9 2z" fill="#b9d98c" /><path d="M12 7l13-4 2 13-12 4z" fill="#f5e15f" /></Ico>
    </TaskItem>
    <TaskItem aria-label="Calculator">
      <Ico w={18} h={24} vb="0 0 18 24"><rect x=".5" y=".5" width="17" height="23" fill="#8bb0d6" stroke="#d5e5f5" /><path d="M2.500 3h13v5h-13z" fill="#e9f2fb" /><path d="M11 4h3v3h-3z" fill="none" stroke="#4778a8" /><path d="M3 11h12M3 14h12M3 17h12M3 20h12" stroke="#f2f8fd" strokeWidth="2" strokeDasharray="2 1.300" /></Ico>
    </TaskItem>
    <TaskItem aria-label="Snipping tool">
      <Ico w={24} h={22} vb="0 0 24 22"><ellipse cx="11" cy="9" rx="9" ry="7" fill="#f0e6ea" stroke="#c4566b" strokeWidth="1.500" /><path d="M7 3l8 12M15 4L4 13" stroke="#7c7c84" strokeWidth="1.600" /><circle cx="17" cy="17" r="2.500" fill="none" stroke="#7b2e3a" strokeWidth="1.800" /><circle cx="21" cy="12" r="2" fill="none" stroke="#7b2e3a" strokeWidth="1.600" /></Ico>
    </TaskItem>
    <TaskItem $open aria-label="Firefox">
      <Ico s={26} vb="0 0 26 26"><circle cx="13" cy="13" r="10.500" fill="#2467b0" /><path d="M10 4c4-3 9 0 9 4-3-2-5-1-6 1z" fill="#62b5e5" /><path d="M2 8c1-3 3-4 3-4 0 2 2 3 4 3l3 2c0 2-3 2-3 4 1 4 8 5 10 0 1-3 0-5-1-7 7 5 7 15 0 18-8 4-18-1-17-12z" fill="#ee7a1c" /><path d="M22 7c4 8 1 14-5 17 3-4 6-9 5-17z" fill="#f9c62e" /></Ico>
    </TaskItem>
    <TaskItem $open aria-label="PowerPoint">
      <Ico s={25} vb="0 0 25 25"><path d="M12 3h12v19H12z" fill="#fff" stroke="#c9482b" /><circle cx="19" cy="9" r="3" fill="#d24726" /><path d="M16 14h6M16 17h6" stroke="#d24726" strokeWidth="1.400" /><path d="M1 3l14-3v25L1 22z" fill="#c93d22" /><path d="M5.500 18V7.500H8c4 0 4 5.500 0 5.500H6" fill="none" stroke="#fff" strokeWidth="2" /></Ico>
    </TaskItem>
    <TaskItem $open aria-label="Recorder">
      <Ico w={26} h={26} vb="0 0 26 26"><circle cx="9" cy="6" r="5" fill="#28282a" /><circle cx="9" cy="6" r="2" fill="#707074" /><path d="M6 8h11v12l-4 4H5l3-5z" fill="#2d2d30" /><path d="M15 9h9v8h-9z" fill="#4b5a2e" stroke="#262626" /><path d="M17 11h5v4h-5z" fill="#9aad4d" /></Ico>
    </TaskItem>
    <Tray>
      <Bare $w={12} aria-label="Show hidden icons"><Ico w={6} h={4} vb="0 0 8 4"><path d="M0 4h8L4 0z" fill="#fff" /></Ico></Bare>
      <Ico s={12} label="Action center"><path d="M2 1v14" stroke="#fff" strokeWidth="2" /><path d="M3 2h9v7H3z" fill="#f5f5f5" /><circle cx="11.500" cy="11.500" r="4.500" fill="#d2362f" /><path d="M9.500 9.500l4 4M13.500 9.500l-4 4" stroke="#fff" strokeWidth="1.400" /></Ico>
      <Ico s={12} label="Power"><path d="M2 3h7v11H2z" fill="none" stroke="#fff" strokeWidth="2" /><path d="M4 1h3v2H4zM4 7h3v6H4z" fill="#fff" /><path d="M10 3v3M14 3v3M9 6h6v3l-2 2h-2L9 9zM12 11v4" stroke="#fff" fill="#fff" strokeWidth="1.300" /></Ico>
      <Ico s={13} label="Wireless"><path d="M1.500 12v2M4.500 10.500V14M7.500 8v6M10.500 5v9M13.500 2v12" stroke="#fff" strokeWidth="2" /></Ico>
      <Ico s={12} label="Volume"><path d="M1 5.500h3L8.500 1v14L4 10.500H1z" fill="#fff" /><path d="M11 5c1.500 2 1.500 4 0 6" stroke="#fff" fill="none" strokeWidth="1.500" /></Ico>
      <Ico s={12} label="Dropbox"><path d="M4.500 1L8 3.500 4 6 .8 3.700zM11.500 1L15.200 3.700 12 6 8 3.500zM4 6l4 2.500-3.500 2.500L.8 8.400zM12 6l3.200 2.400-3.700 2.600L8 8.500zM8 9.400l3.500 2.500L8 14.500l-3.500-2.600z" fill="#fff" /></Ico>
      <Clock>11:19 AM<br />4/28/2015</Clock>
      <ShowDesktop aria-label="Show desktop" />
    </Tray>
  </Taskbar>
);

export default function App() {
  return (
    <>
      <Global />
      <Desktop>
        <BrowserWindow />
        <TaskbarBar />
        <ExplorerWindow />
        <ExtractDialog />
        <Pointer width="11" height="16" viewBox="0 0 11 16" aria-hidden="true">
          <path d="M1 1v12l3-2.700 2 4.700 2-1-2-4.500h4z" fill="#fff" stroke="#222" />
        </Pointer>
      </Desktop>
    </>
  );
}
